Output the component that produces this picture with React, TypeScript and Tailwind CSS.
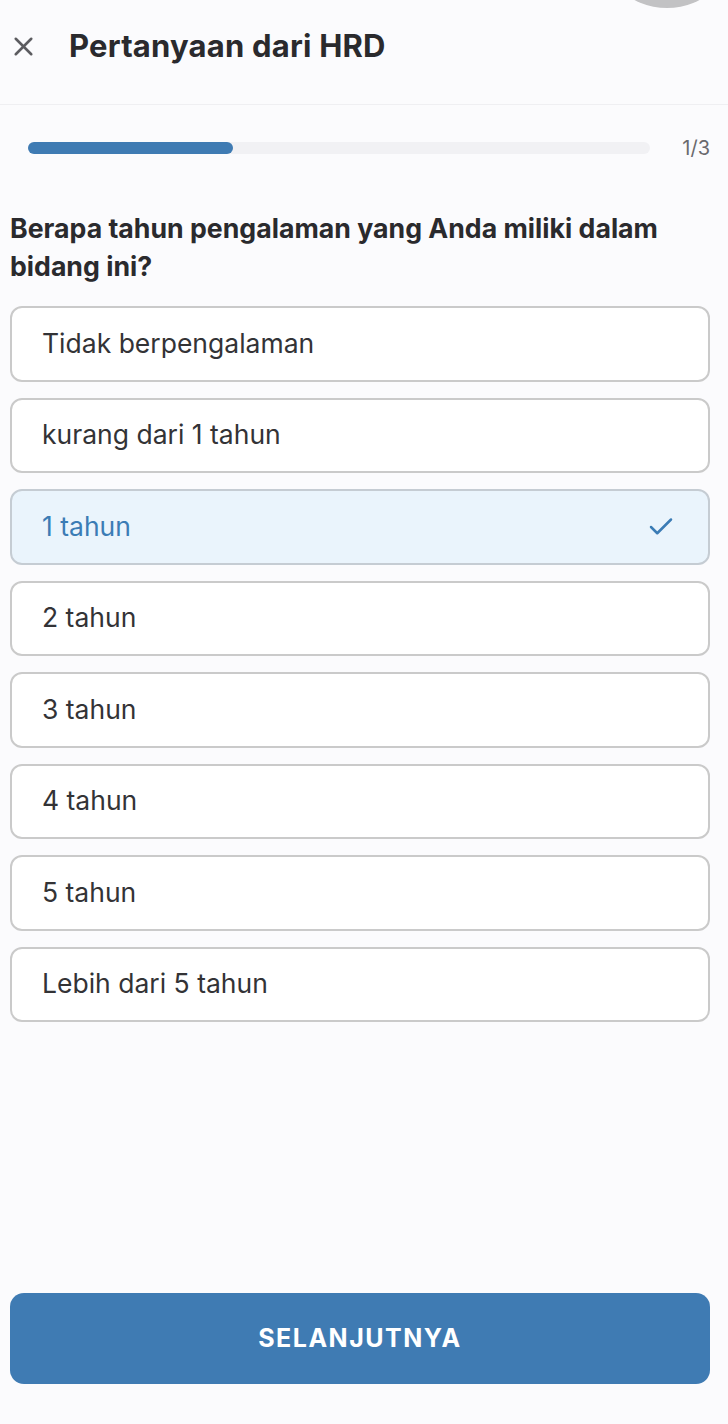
import { X, Check } from 'lucide-react';

const options = [
  'Tidak berpengalaman',
  'kurang dari 1 tahun',
  '1 tahun',
  '2 tahun',
  '3 tahun',
  '4 tahun',
  '5 tahun',
  'Lebih dari 5 tahun',
];

export default function App() {
  const selected = '1 tahun';

  return (
    <div
      className="relative flex h-[1424px] w-[728px] flex-col overflow-hidden bg-[#fbfbfd] text-[#2b2b2e]"
      style={{ fontFamily: 'Inter, "Noto Sans", sans-serif' }}
    >
      {/* floating overlay circle at top right */}
      <div className="absolute -top-[132px] left-[597px] h-[140px] w-[140px] rounded-full bg-[#c2c2c4]" />

      {/* Header */}
      <div className="flex h-[105px] items-center gap-[30px] border-b border-[#efeff2] px-[8px] pb-[12px]">
        <X className="h-[31px] w-[31px] text-[#5c5c60]" strokeWidth={2} />
        <h1 className="text-[31px] font-bold tracking-[0.2px] text-[#2a2a2d]">Pertanyaan dari HRD</h1>
      </div>

      {/* Progress */}
      <div className="mt-[28px] flex items-center gap-[32px] pl-[28px] pr-[18px]">
        <div className="h-[12px] flex-1 rounded-full bg-[#f1f1f4]">
          <div className="h-full w-[33%] rounded-full bg-[#3f7bb3]" />
        </div>
        <span className="text-[20px] text-[#6a6a6e]">1/3</span>
      </div>

      {/* Question */}
      <h2 className="mt-[46px] px-[10px] pr-[40px] text-[26.7px] font-bold leading-[38px] text-[#2a2a2d]">
        Berapa tahun pengalaman yang Anda miliki dalam bidang ini?
      </h2>

      {/* Options */}
      <div className="mt-[21px] flex flex-col gap-[16px] px-[10px] pr-[18px]">
        {options.map((opt) => {
          const isSel = opt === selected;
          return (
            <div
              key={opt}
              className={`flex h-[75.5px] items-center justify-between rounded-[12px] border-2 pl-[30px] pr-[32px] ${
                isSel ? 'border-[#c5ccd3] bg-[#eaf4fc]' : 'border-[#cacaca] bg-white'
              }`}
            >
              <span className={`text-[26.5px] ${isSel ? 'text-[#3b7cb5]' : 'text-[#333336]'}`}>{opt}</span>
              {isSel && <Check className="h-[30px] w-[30px] text-[#3b7cb5]" strokeWidth={2} />}
            </div>
          );
        })}
      </div>

      <div className="flex-1" />

      {/* Next button */}
      <div className="px-[10px] pr-[18px] pb-[40px]">
        <button className="flex h-[91px] w-full items-center justify-center rounded-[14px] bg-[#3f7bb3] text-[25px] font-bold tracking-[1.5px] text-white">
          SELANJUTNYA
        </button>
      </div>
    </div>
  );
}
